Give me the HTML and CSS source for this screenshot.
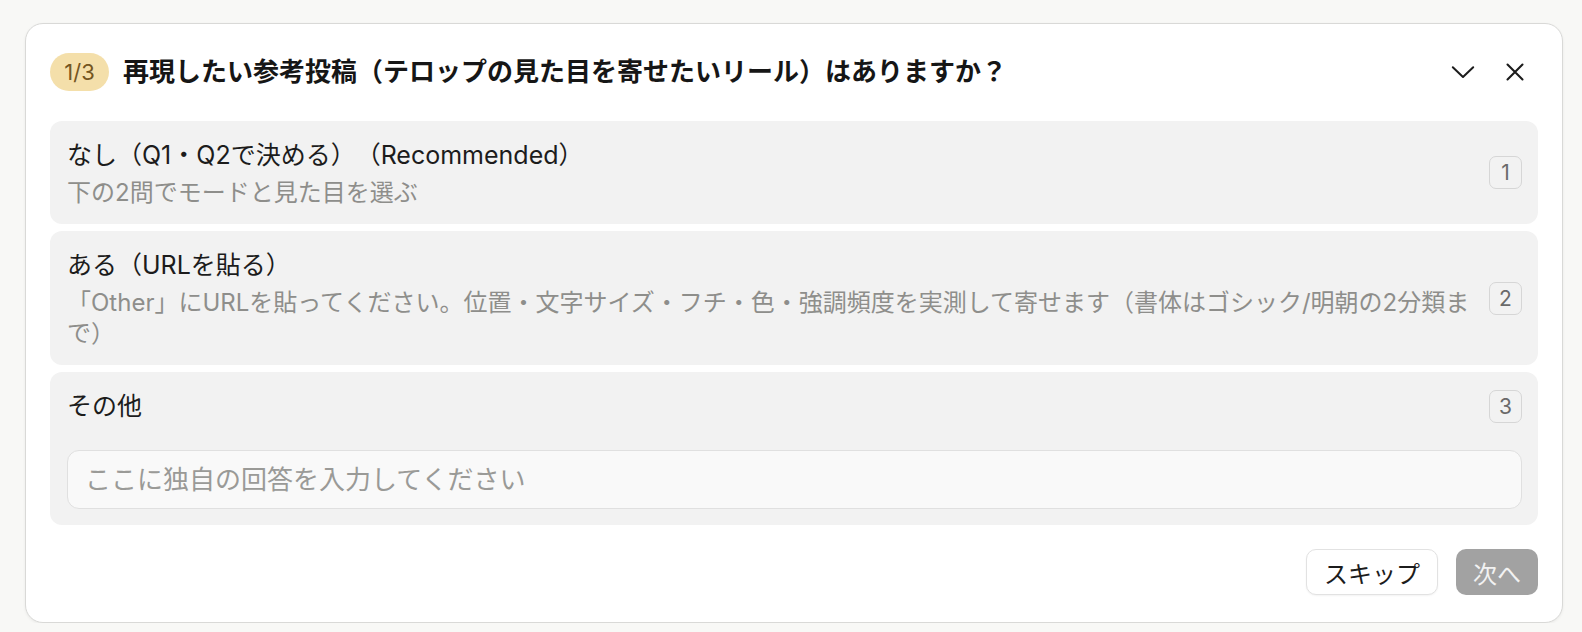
FILE: index.html
```html
<!DOCTYPE html>
<html lang="ja">
<head>
<meta charset="utf-8">
<title>Question</title>
<link rel="stylesheet" href="styles.css">
</head>
<body>
<div class="page">
  <div class="card">
    <div class="header">
      <span class="step">1/3</span>
      <h1 class="title">再現したい参考投稿（テロップの見た目を寄せたいリール）はありますか？</h1>
      <div class="tools">
        <button class="icon-btn" aria-label="折りたたむ">
          <svg width="24" height="24" viewBox="0 0 24 24"><path d="M1.8 7.2 L12 17 L22.2 7.2" fill="none" stroke="#1c1c1c" stroke-width="2" stroke-linecap="round" stroke-linejoin="round"/></svg>
        </button>
        <button class="icon-btn" aria-label="閉じる">
          <svg width="24" height="24" viewBox="0 0 24 24"><path d="M4.5 4.5 L19.5 19.5 M19.5 4.5 L4.5 19.5" fill="none" stroke="#1c1c1c" stroke-width="2.1" stroke-linecap="round"/></svg>
        </button>
      </div>
    </div>

    <div class="options">
      <div class="option">
        <div class="option-text">
          <div class="label">なし（Q1・Q2で決める）（Recommended）</div>
          <div class="desc">下の2問でモードと見た目を選ぶ</div>
        </div>
        <span class="key">1</span>
      </div>

      <div class="option">
        <div class="option-text">
          <div class="label">ある（URLを貼る）</div>
          <div class="desc">「Other」にURLを貼ってください。位置・文字サイズ・フチ・色・強調頻度を実測して寄せます（書体はゴシック/明朝の2分類まで）</div>
        </div>
        <span class="key">2</span>
      </div>

      <div class="option option-other">
        <div class="other-row">
          <div class="label">その他</div>
          <span class="key">3</span>
        </div>
        <input class="answer" type="text" placeholder="ここに独自の回答を入力してください">
      </div>
    </div>

    <div class="footer">
      <button class="btn btn-skip">スキップ</button>
      <button class="btn btn-next">次へ</button>
    </div>
  </div>
</div>
</body>
</html>
```

FILE: styles.css
```css
* {
  box-sizing: border-box;
}

html, body {
  margin: 0;
  padding: 0;
  background: #f8f8f6;
}

body {
  font-family: "Inter", "Noto Sans CJK JP", "Noto Sans", sans-serif;
  color: #1c1c1c;
  text-spacing-trim: space-all;
}

.page {
  padding: 23px 19px 0 25px;
}

.card {
  background: #ffffff;
  border: 1px solid #d9d9d7;
  border-radius: 18px;
  padding: 29px 24px 27px 24px;
  box-shadow: 0 1px 3px rgba(0, 0, 0, 0.06);
}

.header {
  display: flex;
  align-items: center;
  height: 38px;
}

.step {
  display: flex;
  align-items: center;
  justify-content: center;
  width: 59px;
  height: 38px;
  border-radius: 19px;
  background: #f4dfaa;
  color: #75561f;
  font-size: 22px;
  flex-shrink: 0;
}

.title {
  margin: 0 0 0 14px;
  font-size: 26px;
  font-weight: 700;
  color: #161616;
  line-height: 38px;
  flex: 1;
  white-space: nowrap;
}

.tools {
  display: flex;
  align-items: center;
  gap: 16px;
  padding-right: 5px;
}

.icon-btn {
  width: 36px;
  height: 36px;
  padding: 0;
  border: none;
  background: transparent;
  display: flex;
  align-items: center;
  justify-content: center;
}

.options {
  margin-top: 30px;
  display: flex;
  flex-direction: column;
  gap: 7px;
}

.option {
  background: #f2f2f2;
  border-radius: 12px;
  padding: 16px 16px 16px 17px;
  display: flex;
  align-items: center;
  gap: 12px;
}

.option-text {
  flex: 1;
  min-width: 0;
}

.label {
  font-size: 25px;
  line-height: 36px;
  color: #1c1c1c;
}

.desc {
  margin-top: 4px;
  font-size: 24px;
  line-height: 31px;
  color: #8e8e8b;
}

.key {
  width: 33px;
  height: 33px;
  flex-shrink: 0;
  border: 1.5px solid #d6d6d6;
  border-radius: 7px;
  display: flex;
  align-items: center;
  justify-content: center;
  font-size: 21px;
  color: #6a6a6a;
}

.option-other {
  flex-direction: column;
  align-items: stretch;
  gap: 26px;
}

.other-row {
  display: flex;
  align-items: center;
  justify-content: space-between;
}

.answer {
  height: 59px;
  width: 100%;
  border: 1.5px solid #e0e0e0;
  border-radius: 12px;
  background: #f9f9f9;
  padding: 0 17px;
  font-family: inherit;
  font-size: 26px;
  color: #1c1c1c;
  outline: none;
}

.answer::placeholder {
  color: #9a9a97;
}

.footer {
  margin-top: 24px;
  display: flex;
  justify-content: flex-end;
  gap: 18px;
}

.btn {
  height: 46px;
  border-radius: 10px;
  font-family: inherit;
  font-size: 24px;
  padding: 0 17px;
  display: flex;
  align-items: center;
  justify-content: center;
}

.btn-skip {
  background: #ffffff;
  border: 1.5px solid #e2e2e2;
  color: #1c1c1c;
  width: 132px;
  box-shadow: 0 1px 2px rgba(0, 0, 0, 0.05);
}

.btn-next {
  background: #a2a2a2;
  border: none;
  color: #f2f2f2;
  width: 82px;
}
```
